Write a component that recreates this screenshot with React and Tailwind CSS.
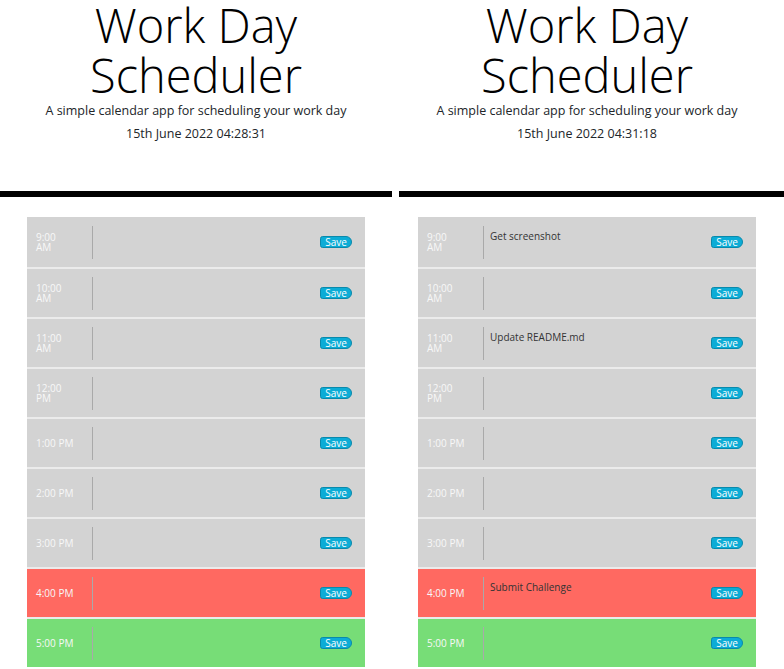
import React from "react";

const hours = [
  { l1: "9:00", l2: "AM" },
  { l1: "10:00", l2: "AM" },
  { l1: "11:00", l2: "AM" },
  { l1: "12:00", l2: "PM" },
  { l1: "1:00 PM" },
  { l1: "2:00 PM" },
  { l1: "3:00 PM" },
  { l1: "4:00 PM" },
  { l1: "5:00 PM" },
];

const bgFor = (i) =>
  i < 7 ? "bg-[#d3d3d3]" : i === 7 ? "bg-[#ff6961]" : "bg-[#77dd77]";

function Row({ h, i, text }) {
  return (
    <div
      className={`flex h-[50px] items-center ${bgFor(i)} ${
        i > 0 ? "border-t-2 border-[#ebebeb]" : ""
      }`}
    >
      <div className="flex h-full w-[65px] shrink-0 items-center pl-[9px] text-[10px] leading-[10px] text-[#f8f8f8]">
        <div>
          {h.l1}
          {h.l2 && (
            <>
              <br />
              {h.l2}
            </>
          )}
        </div>
      </div>
      <div className="flex h-[33px] flex-1 items-start border-l border-[#a9a9a9] pl-[6px] pt-[3px] text-[10px] leading-[15px] text-[#333]">
        {text}
      </div>
      <div className="mr-[13px] flex h-[12px] w-[32px] items-center justify-center rounded-l-[3px] rounded-r-[7px] border border-[#0a89ab] bg-[#0cacd6] text-[10px] leading-none text-white">
        Save
      </div>
    </div>
  );
}

function Panel({ date }) {
  return (
    <div className="h-[191px] text-center text-black">
      <h1 className="text-[47px] font-light leading-[50px]">
        Work Day
        <br />
        Scheduler
      </h1>
      <p className="text-[12.5px] leading-[22px] text-[#212529]">
        A simple calendar app for scheduling your work day
      </p>
      <p className="text-[12.5px] leading-[23px] text-[#212529]">{date}</p>
    </div>
  );
}

function Rows({ texts }) {
  return (
    <div className="flex flex-col">
      {hours.map((h, i) => (
        <Row key={i} h={h} i={i} text={texts[i]} />
      ))}
    </div>
  );
}

export default function App() {
  const leftTexts = ["", "", "", "", "", "", "", "", ""];
  const rightTexts = [
    "Get screenshot",
    "",
    "Update README.md",
    "",
    "",
    "",
    "",
    "Submit Challenge",
    "",
  ];
  return (
    <div
      className="flex h-[669px] w-[784px] gap-[7px] overflow-hidden bg-white"
      style={{ fontFamily: '"Open Sans", "Noto Sans", sans-serif' }}
    >
      <div className="w-[392px] shrink-0">
        <Panel date="15th June 2022 04:28:31" />
        <div className="h-[6px] bg-black" />
        <div className="mx-[27px] mt-[20px]">
          <Rows texts={leftTexts} />
        </div>
      </div>
      <div className="w-[385px] shrink-0">
        <div className="w-[376px]">
          <Panel date="15th June 2022 04:31:18" />
        </div>
        <div className="h-[6px] bg-black" />
        <div className="ml-[19px] mt-[20px] w-[338px]">
          <Rows texts={rightTexts} />
        </div>
      </div>
    </div>
  );
}
